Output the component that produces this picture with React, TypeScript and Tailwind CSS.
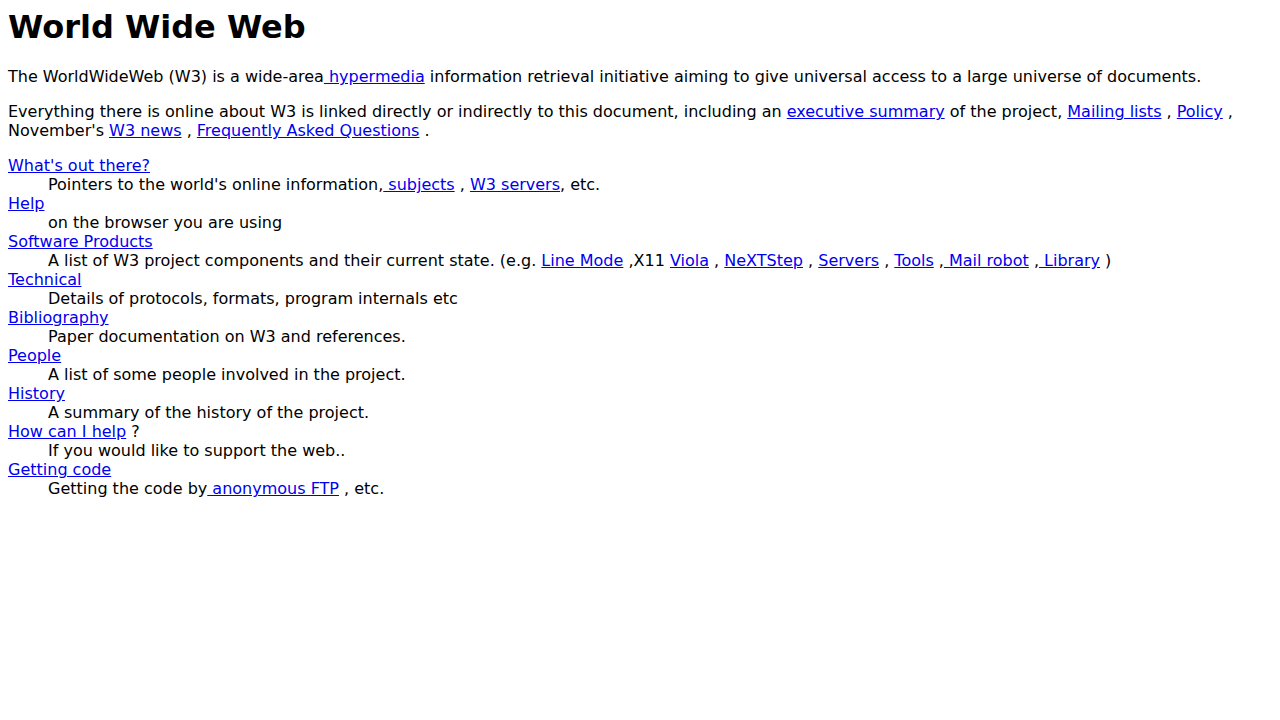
import type { ReactNode } from 'react'

function L({ children }: { children: ReactNode }) {
  return <a href="#" className="text-[#0000ee] underline">{children}</a>
}

const entries: { term: ReactNode; desc: ReactNode }[] = [
  {
    term: <L>What's out there?</L>,
    desc: <>Pointers to the world's online information,<L> subjects</L> , <L>W3 servers</L>, etc.</>,
  },
  { term: <L>Help</L>, desc: <>on the browser you are using</> },
  {
    term: <L>Software Products</L>,
    desc: (
      <>
        A list of W3 project components and their current state. (e.g. <L>Line Mode</L> ,X11 <L>Viola</L> , <L>NeXTStep</L> , <L>Servers</L> , <L>Tools</L> ,<L> Mail robot</L> ,<L> Library</L> )
      </>
    ),
  },
  { term: <L>Technical</L>, desc: <>Details of protocols, formats, program internals etc</> },
  { term: <L>Bibliography</L>, desc: <>Paper documentation on W3 and references.</> },
  { term: <L>People</L>, desc: <>A list of some people involved in the project.</> },
  { term: <L>History</L>, desc: <>A summary of the history of the project.</> },
  { term: <><L>How can I help</L> ?</>, desc: <>If you would like to support the web..</> },
  { term: <L>Getting code</L>, desc: <>Getting the code by<L> anonymous FTP</L> , etc.</> },
]

export default function App() {
  return (
    <div className="min-h-screen bg-white p-2 text-black text-[16px] leading-[normal] font-['DejaVu_Sans',sans-serif]">
      <h1 className="text-[32px] font-bold leading-[normal] mb-[21.44px]">World Wide Web</h1>
      <p className="mb-4">
        The WorldWideWeb (W3) is a wide-area<L> hypermedia</L> information retrieval initiative aiming to give universal access to a large universe of documents.
      </p>
      <p className="mb-4">
        Everything there is online about W3 is linked directly or indirectly to this document, including an <L>executive summary</L> of the project, <L>Mailing lists</L> , <L>Policy</L> , November's <L>W3 news</L> , <L>Frequently Asked Questions</L> .
      </p>
      <dl>
        {entries.map((e, i) => (
          <div key={i}>
            <dt>{e.term}</dt>
            <dd className="ml-10">{e.desc}</dd>
          </div>
        ))}
      </dl>
    </div>
  )
}
